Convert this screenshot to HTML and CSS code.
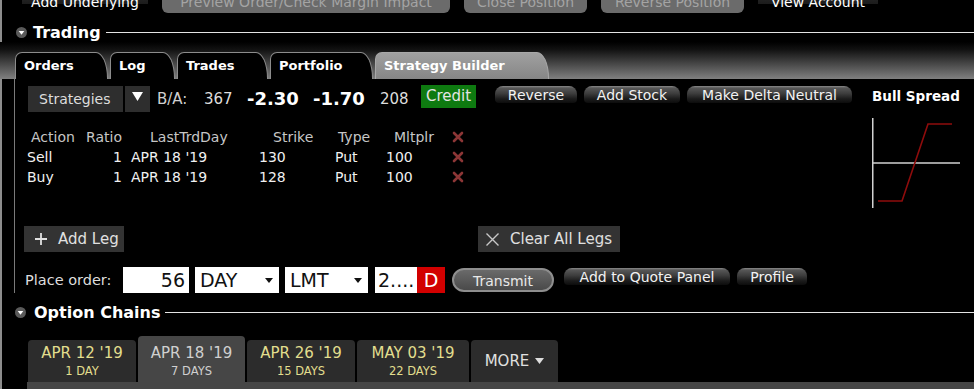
FILE: index.html
```html
<!DOCTYPE html>
<html lang="en">
<head>
    <meta charset="UTF-8">
    <meta name="viewport" content="width=device-width, initial-scale=1.0">
    <title>Trading - Strategy Builder</title>
    <link rel="stylesheet" href="styles.css">
</head>
<body>
<div class="app">
    <!-- top toolbar, cut off by the window -->
    <div class="topbar">
        <span class="top-btn dark w-underlying">Add Underlying</span>
        <span class="top-btn muted w-preview">Preview Order/Check Margin Impact</span>
        <span class="top-btn muted w-close">Close Position</span>
        <span class="top-btn muted w-reverse">Reverse Position</span>
        <span class="top-btn dark w-account">View Account</span>
    </div>

    <div class="section-head">
        <svg class="toggle" width="11" height="11" viewBox="0 0 11 11"><circle cx="5.5" cy="5.5" r="5.5" fill="#5a5a5a"/><path d="M2.7 3.9 H8.3 L5.5 7.7 Z" fill="#fff"/></svg>
        <span class="section-title">Trading</span>
        <span class="section-line"></span>
    </div>

    <div class="tabbar">
        <div class="tab tab-orders">Orders</div>
        <div class="tab tab-log">Log</div>
        <div class="tab tab-trades">Trades</div>
        <div class="tab tab-portfolio">Portfolio</div>
        <div class="tab tab-builder active">Strategy Builder</div>
    </div>

    <div class="panel">
        <div class="builder">
            <div class="quote-row">
                <div class="strategies">Strategies</div>
                <div class="drop-btn"><svg width="11" height="9" viewBox="0 0 11 9"><path d="M0 0 H11 L5.5 9 Z" fill="#fff"/></svg></div>
                <span class="q-label">B/A:</span>
                <span class="q-size">367</span>
                <span class="q-price">-2.30</span>
                <span class="q-price q-ask">-1.70</span>
                <span class="q-size q-asksize">208</span>
                <span class="credit">Credit</span>
                <span class="gloss-btn w-rev">Reverse</span>
                <span class="gloss-btn w-stock">Add Stock</span>
                <span class="gloss-btn w-delta">Make Delta Neutral</span>
            </div>

            <div class="legs">
                <div class="legs-head">
                    <span>Action</span><span>Ratio</span><span>LastTrdDay</span><span>Strike</span><span>Type</span><span>Mltplr</span>
                    <svg class="del" width="12" height="12" viewBox="0 0 12 12"><path d="M2 2 L10 10 M10 2 L2 10" stroke="#8c3636" stroke-width="2.6" stroke-linecap="round"/></svg>
                </div>
                <div class="leg">
                    <span>Sell</span><span>1</span><span>APR 18 '19</span><span>130</span><span>Put</span><span>100</span>
                    <svg class="del" width="12" height="12" viewBox="0 0 12 12"><path d="M2 2 L10 10 M10 2 L2 10" stroke="#8c3636" stroke-width="2.6" stroke-linecap="round"/></svg>
                </div>
                <div class="leg">
                    <span>Buy</span><span>1</span><span>APR 18 '19</span><span>128</span><span>Put</span><span>100</span>
                    <svg class="del" width="12" height="12" viewBox="0 0 12 12"><path d="M2 2 L10 10 M10 2 L2 10" stroke="#8c3636" stroke-width="2.6" stroke-linecap="round"/></svg>
                </div>
            </div>

            <div class="leg-actions">
                <div class="leg-btn add-leg">
                    <svg width="14" height="14" viewBox="0 0 14 14"><path d="M7 1 V13 M1 7 H13" stroke="#e0e0e0" stroke-width="1.8"/></svg>
                    <span>Add Leg</span>
                </div>
                <div class="leg-btn clear-legs">
                    <svg width="15" height="15" viewBox="0 0 15 15"><path d="M1.5 1.5 L13.5 13.5 M13.5 1.5 L1.5 13.5" stroke="#c8c8c8" stroke-width="1.4"/></svg>
                    <span>Clear All Legs</span>
                </div>
            </div>

            <div class="order-row">
                <span class="order-label">Place order:</span>
                <span class="field qty">56</span>
                <span class="field select w-tif">DAY<svg width="8" height="5" viewBox="0 0 8 5"><path d="M0 0 H8 L4 5 Z" fill="#111"/></svg></span>
                <span class="field select w-type">LMT<svg width="8" height="5" viewBox="0 0 8 5"><path d="M0 0 H8 L4 5 Z" fill="#111"/></svg></span>
                <span class="field price">2....</span>
                <span class="field dflag">D</span>
                <span class="transmit">Transmit</span>
                <span class="gloss-btn w-quote">Add to Quote Panel</span>
                <span class="gloss-btn w-profile">Profile</span>
            </div>
        </div>

        <div class="chart-col">
            <div class="chart-title">Bull Spread</div>
            <svg class="payoff" width="92" height="92" viewBox="0 0 92 92">
                <line x1="0.75" y1="0" x2="0.75" y2="90" stroke="#d2d2d2" stroke-width="1.5"/>
                <line x1="0" y1="45" x2="88" y2="45" stroke="#d2d2d2" stroke-width="1.5"/>
                <polyline points="6,83 30,83 56,6 80,6" fill="none" stroke="#8e0c0c" stroke-width="1.6"/>
            </svg>
        </div>
    </div>

    <div class="section-head chains-head">
        <svg class="toggle" width="11" height="11" viewBox="0 0 11 11"><circle cx="5.5" cy="5.5" r="5.5" fill="#5a5a5a"/><path d="M2.7 3.9 H8.3 L5.5 7.7 Z" fill="#fff"/></svg>
        <span class="section-title">Option Chains</span>
        <span class="section-line"></span>
    </div>

    <div class="expiries">
        <div class="expiry w-exp1"><span class="exp-date">APR 12 '19</span><span class="exp-days">1 DAY</span></div>
        <div class="expiry active w-exp2"><span class="exp-date">APR 18 '19</span><span class="exp-days">7 DAYS</span></div>
        <div class="expiry w-exp3"><span class="exp-date">APR 26 '19</span><span class="exp-days">15 DAYS</span></div>
        <div class="expiry w-exp4"><span class="exp-date">MAY 03 '19</span><span class="exp-days">22 DAYS</span></div>
        <div class="expiry more">MORE <svg width="9" height="6" viewBox="0 0 9 6"><path d="M0 0 H9 L4.5 6 Z" fill="#ddd"/></svg></div>
    </div>
    <div class="chain-bar"></div>
</div>
</body>
</html>
```

FILE: styles.css
```css
* {
    box-sizing: border-box;
}
html, body {
    margin: 0;
    padding: 0;
    background: #000;
}
body {
    font-family: "DejaVu Sans", Verdana, sans-serif;
    color: #eee;
}
.app {
    width: 974px;
    height: 389px;
    overflow: hidden;
    background: linear-gradient(to right, #8d8d8d 0, #8d8d8d 2px, #000 2px);
}

/* top toolbar, scrolled half out of view */
.topbar {
    display: flex;
    height: 13px;
    padding-left: 22px;
    gap: 14px;
}
.top-btn {
    flex: none;
    height: 21px;
    margin-top: -8px;
    line-height: 21px;
    font-size: 14px;
    text-align: center;
    border-radius: 0 0 6px 6px;
}
.top-btn.muted {
    background: #6b6b6b;
    color: #a4a4a4;
}
.top-btn.dark {
    background: linear-gradient(#2a2a2a 0, #1c1c1c 12px, transparent 12px);
    color: #fff;
    border-radius: 0;
}
.w-underlying { width: 126px; }
.w-preview { width: 288px; }
.w-close { width: 123px; }
.w-reverse { width: 143px; }
.w-account { width: 120px; }

/* section headers */
.section-head {
    display: flex;
    align-items: center;
    height: 20px;
    margin-top: 9px;
    padding-left: 16px;
}
.toggle {
    flex: none;
}
.section-title {
    margin-left: 6px;
    font-size: 16px;
    font-weight: bold;
    color: #fff;
}
.section-line {
    flex: 1;
    height: 1px;
    margin-left: 5px;
    background: #e4e4e4;
}
.chains-head {
    padding-left: 15px;
}
.chains-head .section-title {
    margin-left: 8px;
}

/* trading tabs */
.tabbar {
    display: flex;
    align-items: flex-end;
    gap: 2px;
    height: 37px;
    padding-left: 15px;
    background: linear-gradient(#000 0%, #111 20%, #808080 100%);
}
.tab {
    height: 27px;
    padding-left: 8px;
    line-height: 26px;
    font-size: 13px;
    font-weight: bold;
    color: #fff;
    background: #000;
    border: 1px solid #8c8c8c;
    border-bottom: 0;
    border-radius: 7px 12px 0 0 / 7px 26px 0 0;
}
.tab.active {
    background: linear-gradient(#a0a0a0, #868686);
    border-color: #a8a8a8;
}
.tab-orders { width: 93px; }
.tab-log { width: 65px; }
.tab-trades { width: 91px; }
.tab-portfolio { width: 103px; }
.tab-builder { width: 174px; }

/* strategy builder panel */
.panel {
    display: flex;
    height: 214px;
    margin-left: 14px;
    border-left: 1px solid #7a7a7a;
}
.builder {
    flex: 1;
    padding: 6px 0 0 13px;
}
.quote-row {
    display: flex;
    align-items: center;
    height: 27px;
}
.strategies {
    align-self: flex-start;
    width: 95px;
    height: 26px;
    margin-top: 1px;
    padding-left: 11px;
    line-height: 26px;
    font-size: 14px;
    color: #ddd;
    background: #2e2e2e;
}
.drop-btn {
    align-self: flex-start;
    display: flex;
    justify-content: center;
    width: 25px;
    height: 26px;
    margin: 1px 7px 0 2px;
    padding-top: 6px;
    background: #2e2e2e;
}
.q-label {
    width: 47px;
    font-size: 15px;
    color: #cfcfcf;
}
.q-size {
    width: 43px;
    font-size: 15px;
    color: #ddd;
}
.q-price {
    width: 66px;
    font-size: 18px;
    font-weight: bold;
    color: #fff;
}
.q-ask {
    width: 67px;
}
.q-asksize {
    width: 41px;
}
.credit {
    align-self: flex-start;
    width: 55px;
    height: 23px;
    line-height: 23px;
    text-align: center;
    font-size: 15px;
    color: #e4e4e4;
    background: #0e7a10;
}
.gloss-btn {
    flex: none;
    align-self: flex-start;
    height: 17px;
    margin-top: 1px;
    margin-left: 7px;
    line-height: 18px;
    text-align: center;
    font-size: 14px;
    color: #f2f2f2;
    border-radius: 8px 8px 4px 4px;
    background: linear-gradient(#8a8a8a 0, #575757 2px, #3c3c3c 45%, #1c1c1c 75%, #0c0c0c 100%);
}
.w-rev { width: 82px; margin-left: 19px; }
.w-stock { width: 96px; }
.w-delta { width: 165px; }

.legs {
    margin-top: 15px;
    font-size: 14px;
}
.legs-head, .leg {
    display: grid;
    align-items: center;
    height: 20px;
    line-height: 20px;
}
.legs-head {
    grid-template-columns: 55px 64px 123px 65px 56px 58px 12px;
    margin-left: 3px;
    color: #c6c6c6;
}
.leg {
    grid-template-columns: 86px 18px 128px 76px 51px 66px 12px;
    margin-left: -1px;
    color: #f0f0f0;
}
.del {
    display: block;
}

.leg-actions {
    display: flex;
    height: 26px;
    margin-top: 39px;
    margin-left: -4px;
}
.leg-btn {
    display: flex;
    align-items: center;
    height: 26px;
    font-size: 15px;
    color: #e0e0e0;
    background: #333;
}
.add-leg {
    width: 100px;
    gap: 10px;
    padding-left: 10px;
}
.clear-legs {
    width: 142px;
    gap: 10px;
    margin-left: 354px;
    padding-left: 7px;
}

.order-row {
    display: flex;
    align-items: center;
    height: 26px;
    margin-top: 15px;
    margin-left: -3px;
}
.order-label {
    width: 98px;
    font-size: 14.5px;
    color: #ddd;
}
.field {
    height: 26px;
    line-height: 27px;
    font-size: 19px;
    color: #111;
    background: #fff;
}
.qty {
    width: 66px;
    padding-right: 4px;
    text-align: right;
}
.select {
    display: flex;
    align-items: center;
    justify-content: space-between;
    margin-left: 6px;
    padding: 0 6px 0 5px;
}
.w-tif { width: 84px; }
.w-type { width: 83px; }
.price {
    width: 42px;
    margin-left: 7px;
    padding-left: 3px;
}
.dflag {
    width: 28px;
    text-align: center;
    color: #fff;
    background: #d20000;
}
.transmit {
    width: 102px;
    height: 24px;
    margin-left: 7px;
    line-height: 22px;
    text-align: center;
    font-size: 14px;
    color: #e8e8e8;
    border: 2px solid #8e8e8e;
    border-radius: 12px;
    background: linear-gradient(#6a6a6a, #4a4a4a);
}
.w-quote { width: 166px; margin-left: 10px; }
.w-profile { width: 70px; }

.chart-col {
    width: 102px;
    padding-top: 7px;
}
.chart-title {
    height: 20px;
    line-height: 20px;
    font-size: 13.5px;
    font-weight: bold;
    color: #fff;
}
.payoff {
    display: block;
    margin-top: 12px;
}

/* option chain expiries */
.expiries {
    display: flex;
    align-items: flex-end;
    gap: 2px;
    height: 60px;
    padding-left: 28px;
}
.expiry {
    display: flex;
    flex-direction: column;
    justify-content: flex-end;
    align-items: center;
    height: 42px;
    padding-bottom: 4px;
    color: #e2de8e;
    background: #2c2c2c;
    border-radius: 4px 4px 0 0;
}
.expiry.active {
    height: 46px;
    color: #d0d0d0;
    background: #464646;
}
.exp-date {
    line-height: 18px;
    margin-bottom: 2px;
    font-size: 15px;
}
.exp-days {
    line-height: 14px;
    font-size: 11.5px;
}
.w-exp1 { width: 108px; }
.w-exp2 { width: 107px; }
.w-exp3 { width: 108px; }
.w-exp4 { width: 112px; }
.expiry.more {
    flex-direction: row;
    justify-content: center;
    gap: 6px;
    width: 87px;
    padding-bottom: 0;
    font-size: 15px;
    color: #e0e0e0;
}
.chain-bar {
    height: 7px;
    margin-left: 27px;
    background: #464646;
}
```
